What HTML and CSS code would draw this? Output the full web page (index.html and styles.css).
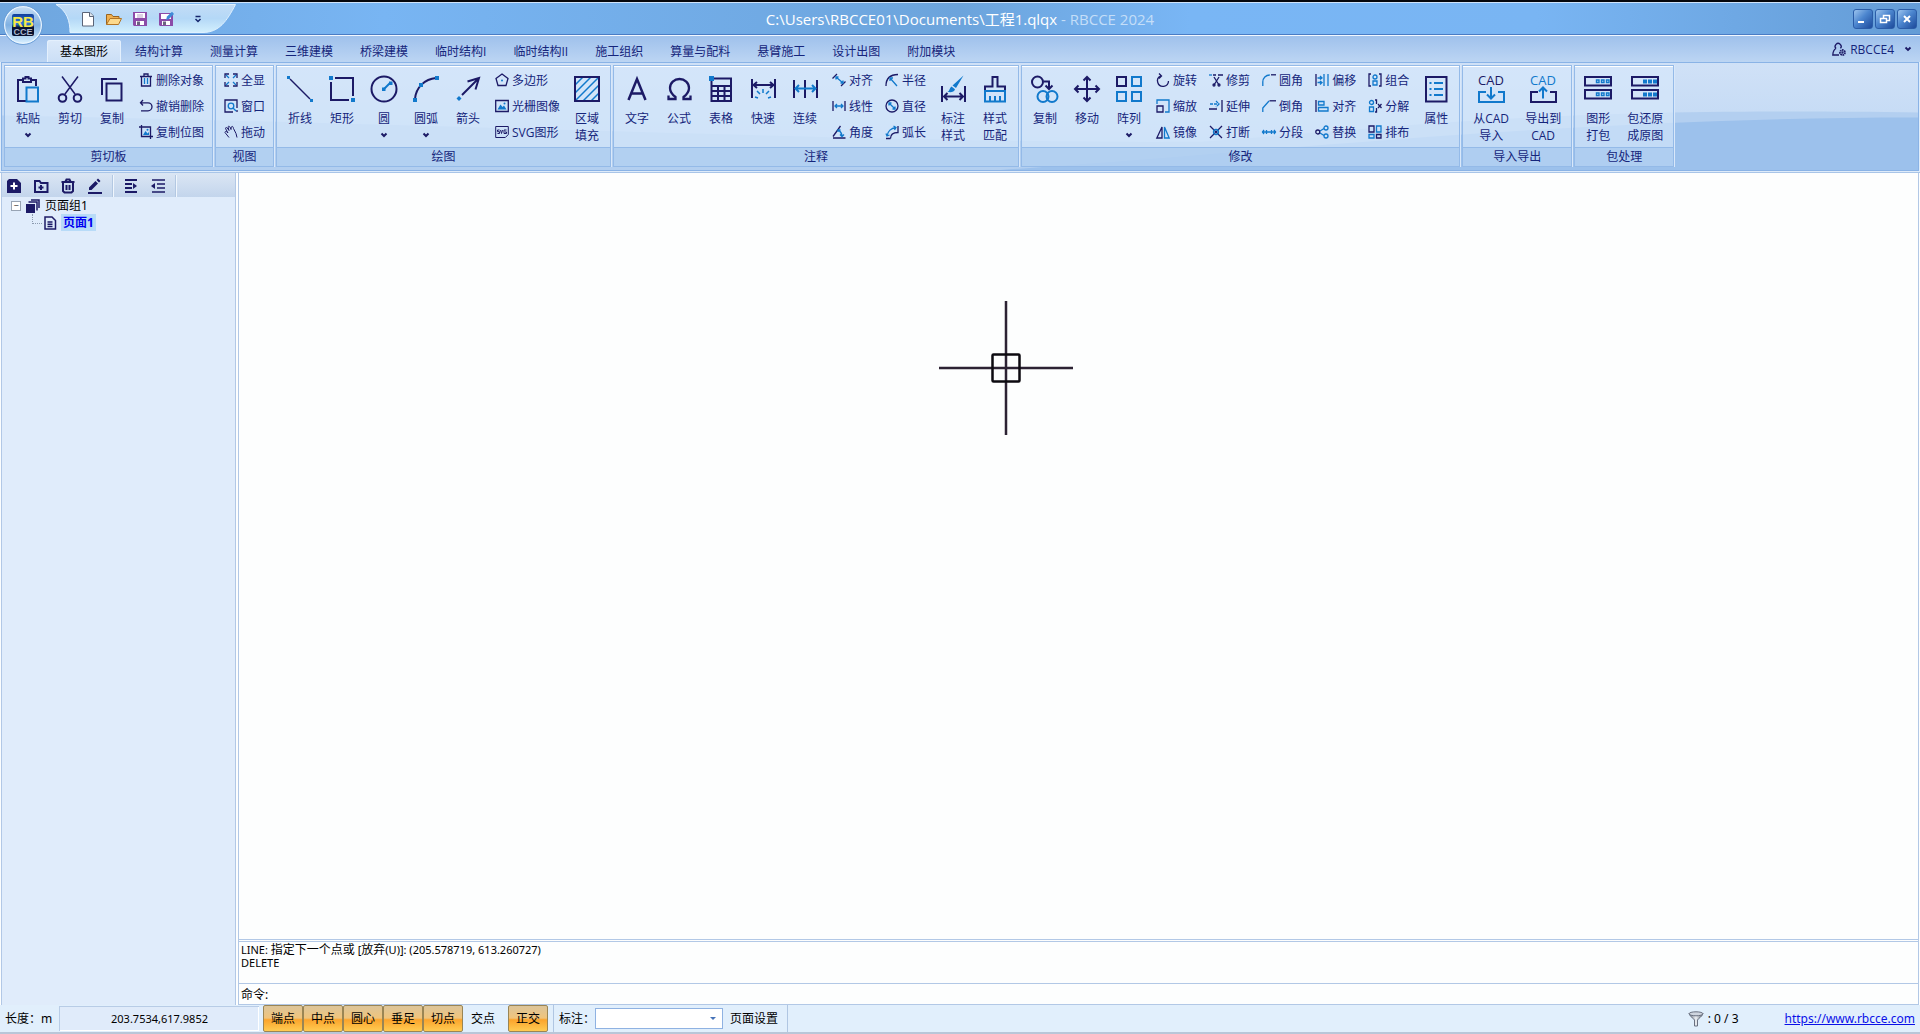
FILE: index.html
```html
<!DOCTYPE html>
<html lang="zh-CN">
<head>
<meta charset="utf-8">
<title>工程1.qlqx - RBCCE 2024</title>
<link rel="stylesheet" href="styles.css">
</head>
<body>
<div class="app">
  <header class="titlebar">
    <svg class="qat-shape" viewBox="0 0 180 30" aria-hidden="true"><defs><linearGradient id="qat" x2="0" y2="1"><stop offset="0" stop-color="#c3dcf6"/><stop offset=".5" stop-color="#b4d8f7"/><stop offset="1" stop-color="#d3f0fd"/></linearGradient></defs><path d="M0 .5H179.500C171 17 163 28.500 147 28.500H14C14 17 11 7 0 .5z" fill="url(#qat)" stroke="#dff0ff"/></svg>
    <nav class="qat" aria-label="快速访问">
      <button aria-label="新建"><svg viewBox="0 0 16 16"><path d="M2.500 1.500h7.500l3.500 3.500v10h-11z" fill="#fff" stroke="#5a6478"/><path d="M9.500 1.500V5.500h4" fill="#dfe6ee" stroke="#5a6478"/></svg></button>
      <button aria-label="打开"><svg viewBox="0 0 16 16"><path d="M.5 13.500V3.500h5l1.500 2h6v3" fill="#f0b050" stroke="#9a6420"/><path d="M.5 13.500L4 7.500h11.500l-3 6z" fill="#fcd98c" stroke="#b27424"/></svg></button>
      <button aria-label="保存"><svg viewBox="0 0 16 16"><path d="M1 1h14v14H2l-1-1z" fill="#8c4ba8"/><path d="M3 2h10v5H3zM4 10h8v4H4z" fill="#fff"/><path d="M5 4h6M5 6h6" stroke="#b9a0c8"/><path d="M5 10.500h3V14H5z" fill="#6c6480"/></svg></button>
      <button aria-label="另存为"><svg viewBox="0 0 16 16"><path d="M1 2h14v13H2l-1-1z" fill="#8c4ba8"/><path d="M3 3h10v5H3zM4 10h8v4H4z" fill="#fff"/><path d="M5 10.500h3V14H5z" fill="#6c6480"/><path d="M8 9l1-3.500L14 .8 16 3l-5 5z" fill="#3f8cd8"/></svg></button>
      <button class="more" aria-label="自定义"><svg viewBox="0 0 16 16"><path d="M5.500 5.500h5M5.500 8l2.500 2.500L10.500 8" fill="none" stroke="#15256b" stroke-width="1.500"/></svg></button>
    </nav>
    <h1 class="title">C:\Users\RBCCE01\Documents\工程1.qlqx<span> - RBCCE 2024</span></h1>
    <div class="winbtns">
      <button aria-label="最小化"><svg viewBox="0 0 18 18"><path d="M4 12h6" stroke="#fff" stroke-width="2"/></svg></button>
      <button aria-label="还原"><svg viewBox="0 0 18 18"><path d="M7.500 8V5.500h6v5H11M4.500 8.500h6v4h-6z" fill="none" stroke="#fff" stroke-width="1.500"/></svg></button>
      <button aria-label="关闭"><svg viewBox="0 0 18 18"><path d="M6 6l6 6M12 6l-6 6" stroke="#fff" stroke-width="2"/></svg></button>
    </div>
  </header>
  <button class="orb" aria-label="RBCCE">
    <svg viewBox="0 0 40 40"><defs><linearGradient id="orb" x2="0" y2="1"><stop offset="0" stop-color="#c8dff5"/><stop offset=".5" stop-color="#7fb0e2"/><stop offset="1" stop-color="#d8efff"/></linearGradient><linearGradient id="logo" x2="0" y2="1"><stop offset="0" stop-color="#123f9c"/><stop offset=".45" stop-color="#2a7bd6"/><stop offset=".62" stop-color="#0a1230"/></linearGradient></defs><circle cx="20" cy="20" r="18.500" fill="url(#orb)" stroke="#e9f5ff" stroke-width="1.500"/><circle cx="20" cy="20" r="19.500" fill="none" stroke="#6b9fd8"/><rect x="9" y="9" width="22" height="22" rx="2" fill="url(#logo)"/><text x="20" y="22" class="logo-rb">RB</text><text x="20" y="30" class="logo-cce">CCE</text></svg>
  </button>

  <div class="tabrow">
    <nav class="tabs" aria-label="功能区">
      <button class="active">基本图形</button><button>结构计算</button><button>测量计算</button><button>三维建模</button><button>桥梁建模</button><button>临时结构I</button><button>临时结构II</button><button>施工组织</button><button>算量与配料</button><button>悬臂施工</button><button>设计出图</button><button>附加模块</button>
    </nav>
    <button class="user"><svg viewBox="0 0 14 14"><path d="M4 6.500a3 3 0 1 1 4.500-.2M4 6.500C2 7.500 1 9.500 .8 13H7"/><circle cx="10.500" cy="10.500" r="2.500" stroke-width="1.800" stroke-dasharray="1.600 .6"/><circle cx="10.500" cy="10.500" r=".5"/></svg>RBCCE4<svg class="chev" viewBox="0 0 6 6"><path d="M.5 1.500L3 4 5.500 1.500"/></svg></button>
  </div>

  <main class="ribbon">
    <svg class="wave" viewBox="0 0 1918 106" preserveAspectRatio="none" aria-hidden="true"><path d="M0 52C500 62 900 80 1200 78C1440 60 1560 44 1918 49V106H0z" fill="#b3cff0"/><path d="M1000 106C1250 90 1560 54 1918 54V106z" fill="#9cc1ec"/></svg>

    <section class="group">
      <div class="body">
        <button class="lg"><svg viewBox="0 0 28 28"><path d="M12 26H4V5h5M17 5h5v6"/><path d="M9 7V3.500h2.500V2h3v1.500H17V7z"/><path class="b" d="M12.500 12.500h11.500v14H12.500z"/></svg><span>粘贴</span><svg class="chev" viewBox="0 0 6 6"><path d="M.5 1.500L3 4 5.500 1.500"/></svg></button>
        <button class="lg"><svg viewBox="0 0 28 28"><path d="M6 1.500L19 19M22 1.500L9 19" stroke-width="1.500"/><circle cx="6.500" cy="23" r="3.800"/><circle cx="21.500" cy="23" r="3.800"/></svg><span>剪切</span></button>
        <button class="lg"><svg viewBox="0 0 28 28"><path d="M4 20V4h15" /><path d="M8.500 8.500h15v17h-15z"/></svg><span>复制</span></button>
        <div class="col">
          <button class="sm"><svg viewBox="0 0 14 14"><path d="M2.500 4v9h9V4M5 3V1h4v2M1 3.500h12"/><path class="b" d="M5.500 5v6M8.500 5v6"/></svg>删除对象</button>
          <button class="sm"><svg viewBox="0 0 14 14"><path d="M4 1L1.500 3.800 4 6.500M1.500 3.800H9a4 4 0 0 1 0 8H2"/></svg>撤销删除</button>
          <button class="sm"><svg viewBox="0 0 14 14"><path d="M0 2h11.500v12M2.500 0v11.500H14"/><path class="bf" d="M4 10l2.500-4 2 2.500L10 7v3z"/><circle class="bf" cx="8.500" cy="4.800" r="1"/></svg>复制位图</button>
        </div>
      </div>
      <h2>剪切板</h2>
    </section>

    <section class="group">
      <div class="body">
        <div class="col">
          <button class="sm"><svg viewBox="0 0 14 14"><path d="M1 5V1h4M9 1h4v4M13 9v4H9M5 13H1V9"/><path class="b" d="M2 2l3 3M12 2L9 5M12 12L9 9M2 12l3-3"/></svg>全显</button>
          <button class="sm"><svg viewBox="0 0 14 14"><path d="M9 13H1V1h12v8M13 11v2"/><circle class="b" cx="7" cy="7" r="2.800"/><path class="b" d="M9 9l3 3"/></svg>窗口</button>
          <button class="sm"><svg viewBox="0 0 14 14"><path d="M5 12.500L1 7.500C1 6 2.500 6 4 8L1.500 3.500C1.500 2 3 2 5 5.500L4 2C4.500 .5 6 1 7 4.500C7 .5 9 .5 9.500 3.500L12 8.500 13 12.500" stroke-width="1"/></svg>拖动</button>
        </div>
      </div>
      <h2>视图</h2>
    </section>

    <section class="group">
      <div class="body">
        <button class="lg"><svg viewBox="0 0 28 28"><path d="M4 4l20 20" stroke-width="1.500"/><path class="bf" d="M1 1h3v3H1zM24 24h3v3h-3z"/></svg><span>折线</span></button>
        <button class="lg"><svg viewBox="0 0 28 28"><path d="M7 3h18v18M21 25H3V7"/><path class="bf" d="M1 1h4v4H1zM23 23h4v4h-4z"/></svg><span>矩形</span></button>
        <button class="lg"><svg viewBox="0 0 28 28"><circle cx="14" cy="14" r="12.500"/><path class="b" d="M14 14l6-6"/><path class="bf" d="M12 12.500h3.500V16H12zM19 6.500h3.500V10H19z"/></svg><span>圆</span><svg class="chev" viewBox="0 0 6 6"><path d="M.5 1.500L3 4 5.500 1.500"/></svg></button>
        <button class="lg"><svg viewBox="0 0 28 28"><path d="M3 24C4 12 13 4 24 3"/><path class="bf" d="M1 23h4v4H1zM23 1h4v4h-4zM7 8h4v4H7z"/></svg><span>圆弧</span><svg class="chev" viewBox="0 0 6 6"><path d="M.5 1.500L3 4 5.500 1.500"/></svg></button>
        <button class="lg"><svg viewBox="0 0 28 28"><path d="M8 20L25 3M13.500 6.500L25 3l-3.500 11.500"/><path class="bf" d="M5 21l2.500 2.500L5 26l-2.500-2.500z"/></svg><span>箭头</span></button>
        <div class="col">
          <button class="sm"><svg viewBox="0 0 14 14"><path d="M7 1l6 4.500L11 12.500H3L1 5.500z"/><circle class="bf" cx="7" cy="7.500" r="1"/></svg>多边形</button>
          <button class="sm"><svg viewBox="0 0 14 14"><path d="M.7 1.500h12.600v11H.7z"/><path class="bf" d="M2.500 10.500l3-5 2 2.500L9 6.500l2.500 4z"/><circle class="bf" cx="9.500" cy="4.500" r="1"/></svg>光栅图像</button>
          <button class="sm"><svg viewBox="0 0 14 14"><path d="M.7 1.500h12.600v8l-3 3H.7z" stroke-width="1"/><path d="M4.500 5H2.500v1.700h2v1.800H2.500M5.500 5l1 3.500L7.500 5M11.500 5H9v3.500h2.500V7H10" stroke-width="1"/></svg>SVG图形</button>
        </div>
        <button class="lg"><svg viewBox="0 0 28 28"><path class="b" d="M2 10l8-8M2 18L18 2M2 26L26 2M10 26l16-16M18 26l8-8" stroke-width="1.500"/><path d="M2 2h24v24H2z"/></svg><span>区域<br>填充</span></button>
      </div>
      <h2>绘图</h2>
    </section>

    <section class="group">
      <div class="body">
        <button class="lg"><svg viewBox="0 0 28 28"><path d="M5.500 25L14 4l8.500 21M8.500 18.500h11" stroke-width="2.500"/></svg><span>文字</span></button>
        <button class="lg"><svg viewBox="0 0 28 28"><path d="M3.500 20.500V24h7v-2C6.500 19 5 16 5 13a9.500 9 0 0 1 19 0c0 3-1.500 6-5.500 9v2h7v-3.500" stroke-width="2.300"/></svg><span>公式</span></button>
        <button class="lg"><svg viewBox="0 0 28 28"><path d="M4.500 3.500H24V26H4.500zM4.500 11H24M4.500 16H24M4.500 21H24M11 11v15M17.500 11v15"/><path class="bf" d="M2 1h5v5H2z"/></svg><span>表格</span></button>
        <button class="lg"><svg viewBox="0 0 28 28"><path d="M3 4v19M26 4v19M5 10h18M8 7l-3.500 3L8 13M21 7l3.500 3-3.500 3"/><path class="b" d="M6 22l3 1M8 16l3 3M14 14v4M20 16l-3 3M22 22l-3 1" stroke-width="1.500"/></svg><span>快速</span></button>
        <button class="lg"><svg viewBox="0 0 28 28"><path d="M3 5v18M14 5v18M26 5v18"/><path class="b" d="M4 13.500h20M8 10l-3.500 3.500L8 17M21 10l3.500 3.500L21 17"/></svg><span>连续</span></button>
        <div class="col">
          <button class="sm"><svg viewBox="0 0 14 14"><path d="M.5 5.500L5 1M9 13l4.500-4.500"/><path class="b" d="M4 4l7 6M4 6.500V4h2.500M8.500 10H11V7.500"/></svg>对齐</button>
          <button class="sm"><svg viewBox="0 0 14 14"><path d="M1 2v10M13 2v10"/><path class="b" d="M3 7h8M5 5L3 7l2 2M9 5l2 2-2 2"/></svg>线性</button>
          <button class="sm"><svg viewBox="0 0 14 14"><path d="M8.500 1L1 11.500M1 13h12.500"/><path class="b" d="M7 5.500c2 1.500 3 3.500 3 6M8 9.500l2 2 2-2M6 7V5h2.500"/></svg>角度</button>
        </div>
        <div class="col">
          <button class="sm"><svg viewBox="0 0 14 14"><path d="M1 13C1 6 5 1.500 13 1.500"/><path class="b" d="M5 5l7 8M5 8V5h3"/></svg>半径</button>
          <button class="sm"><svg viewBox="0 0 14 14"><circle cx="7" cy="7" r="6"/><path class="b" d="M4 4l6 6M4 6.500V4h2.500M7.500 10H10V7.500"/></svg>直径</button>
          <button class="sm"><svg viewBox="0 0 14 14"><path d="M5.500 13.500c0-3.500 2-6 7.500-6V1M1 13.500h4.500"/><path class="b" d="M2 11C3 6 5 3.500 11 2.500M8.500 1L11 2.500 9.500 5M1 8.500L2 11l2.500-1"/></svg>弧长</button>
        </div>
        <button class="lg"><svg viewBox="0 0 28 28"><path d="M3 11v16M26 11v16M5 21.500h19M8.500 18L5 21.500 8.500 25M20.500 18l3.500 3.500-3.500 3.500"/><path class="bf" d="M24.500 .5L17 13l-3.500-2.500zM12.500 11.500l3.500 2.800c-1 3-3.500 3-7.500 2.700 2-1 2-4 4-5.500z"/></svg><span>标注<br>样式</span></button>
        <button class="lg"><svg viewBox="0 0 28 28"><path d="M4 16v-4.500h7.500V2h5v9.500H24V16"/><path class="b" d="M4 16h20v10.500H4zM9 26v-5M14 26v-5M19 26v-5"/></svg><span>样式<br>匹配</span></button>
      </div>
      <h2>注释</h2>
    </section>

    <section class="group">
      <div class="body">
        <button class="lg"><svg viewBox="0 0 28 28"><circle cx="6.500" cy="7" r="5.500"/><path d="M13 6.500h5v7M14.500 10.500l3.500 3.500 3.500-3.500"/><circle class="b" cx="12" cy="21.500" r="5.500"/><circle class="b" cx="21" cy="21.500" r="5.500"/></svg><span>复制</span></button>
        <button class="lg"><svg viewBox="0 0 28 28"><path d="M14 2v24M2 14h24M10.500 5.500L14 2l3.500 3.500M10.500 22.500L14 26l3.500-3.500M5.500 10.500L2 14l3.500 3.500M22.500 10.500L26 14l-3.500 3.500"/></svg><span>移动</span></button>
        <button class="lg"><svg viewBox="0 0 28 28"><path d="M2 2h9v9H2z"/><path class="b" d="M17 2h9v9h-9zM2 17h9v9H2zM17 17h9v9h-9z"/></svg><span>阵列</span><svg class="chev" viewBox="0 0 6 6"><path d="M.5 1.500L3 4 5.500 1.500"/></svg></button>
        <div class="col">
          <button class="sm"><svg viewBox="0 0 14 14"><path d="M4.500 3A5.500 5.500 0 1 0 12.500 8M3 .5L5.500 3 3 5.500"/></svg>旋转</button>
          <button class="sm"><svg viewBox="0 0 14 14"><path d="M1 7h6v6H1z"/><path class="b" d="M1 5V1h12v12H9"/></svg>缩放</button>
          <button class="sm"><svg viewBox="0 0 14 14"><path d="M6 2v11H.8z"/><path class="b" d="M8.500 2v11h4.700z"/></svg>镜像</button>
        </div>
        <div class="col">
          <button class="sm"><svg viewBox="0 0 14 14"><path class="b" d="M0 2h3"/><path d="M4 2h3M9 2h5M5 4l5 8M10 4l-5 8"/><circle cx="5" cy="12" r="1"/><circle cx="10" cy="12" r="1"/></svg>修剪</button>
          <button class="sm"><svg viewBox="0 0 14 14"><path d="M13 1v12M0 10h8"/><path class="b" d="M1 5h9M7 2l3 3-3 3" stroke-dasharray="3 1"/></svg>延伸</button>
          <button class="sm"><svg viewBox="0 0 14 14"><path d="M1 1l12 12M13 1L1 13"/><circle class="b" cx="7" cy="7" r="2.500"/></svg>打断</button>
        </div>
        <div class="col">
          <button class="sm"><svg viewBox="0 0 14 14"><path class="b" d="M.8 13V9c0-4 3-7 7-7"/><path d="M9 1.800h5"/></svg>圆角</button>
          <button class="sm"><svg viewBox="0 0 14 14"><path class="b" d="M.8 13V9L7 2"/><path d="M7.500 1.800H14"/></svg>倒角</button>
          <button class="sm"><svg viewBox="0 0 14 14"><path class="b" d="M0 7h14M4.500 5v4M9.500 5v4M2 5L.5 7 2 9M12 5l1.500 2L12 9"/></svg>分段</button>
        </div>
        <div class="col">
          <button class="sm"><svg viewBox="0 0 14 14"><path d="M1 1v12"/><path class="b" d="M9 1v12M13 1v12M2.500 5h4M5 3l2 2-2 1.500M2.500 9.500h4M5 8l2 1.500L5 11.500"/></svg>偏移</button>
          <button class="sm"><svg viewBox="0 0 14 14"><path d="M1 1v12"/><path class="b" d="M3.500 2.500H9v3.500H3.500zM3.500 8.500H13V12H3.500z"/></svg>对齐</button>
          <button class="sm"><svg viewBox="0 0 14 14"><circle cx="2.800" cy="7" r="2"/><path class="b" d="M5 6l4-2.500M5 8l4 2.500"/><circle class="b" cx="11" cy="3" r="2"/><circle class="b" cx="11" cy="11" r="2"/></svg>替换</button>
        </div>
        <div class="col">
          <button class="sm"><svg viewBox="0 0 14 14"><path d="M3 1H1v12h2M11 1h2v12h-2"/><circle class="b" cx="7" cy="4" r="2"/><path class="b" d="M5 8h4v4H5z"/></svg>组合</button>
          <button class="sm"><svg viewBox="0 0 14 14"><circle class="b" cx="3.500" cy="3.500" r="2"/><path class="b" d="M1.500 8h4v4.500h-4z"/><path d="M7 1h1.500v4M7 13h1.500V9M10 5l3.500 4M13.500 5L10 9"/></svg>分解</button>
          <button class="sm"><svg viewBox="0 0 14 14"><path d="M1 1h5v6H1z"/><path class="b" d="M8.500 1h4.500v6H8.500zM1 9.500h5V13H1z"/><path d="M8.500 9.500h4.500V13H8.500z"/></svg>排布</button>
        </div>
        <button class="lg"><svg viewBox="0 0 28 28"><path d="M4 2h20.500v24.500H4z"/><path class="b" d="M12 8h9M12 14h9M12 20h9"/><path class="bf" d="M7.500 7h2v2h-2zM7.500 13h2v2h-2zM7.500 19h2v2h-2z"/></svg><span>属性</span></button>
      </div>
      <h2>修改</h2>
    </section>

    <section class="group">
      <div class="body">
        <button class="lg wide"><svg viewBox="0 0 28 28"><text x="14" y="10">CAD</text><path class="b" d="M9 17H2v10h25V17h-6M14 12v11M10 19.500l4 4 4-4"/></svg><span>从CAD<br>导入</span></button>
        <button class="lg wide"><svg viewBox="0 0 28 28"><text class="tb" x="14" y="10">CAD</text><path d="M9 17H2v10h25V17h-6"/><path class="b" d="M14 23.500v-11M10 16.500l4-4 4 4"/></svg><span>导出到<br>CAD</span></button>
      </div>
      <h2>导入导出</h2>
    </section>

    <section class="group">
      <div class="body">
        <button class="lg"><svg viewBox="0 0 28 28"><path d="M1 2h26v8.500H1zM1 15h26v8.500H1z"/><path class="b thin" d="M12.500 5h2.500v2.500h-2.500zM17.500 5h2.500v2.500h-2.500zM22.500 5h2.500v2.500h-2.500zM12.500 18h2.500v2.500h-2.500zM17.500 18h2.500v2.500h-2.500zM22.500 18h2.500v2.500h-2.500z"/></svg><span>图形<br>打包</span></button>
        <button class="lg wide"><svg viewBox="0 0 28 28"><path d="M1 2h26v8.500H1zM1 15h26v8.500H1z"/><path class="bf" d="M12 4.500h4v4h-4zM17 4.500h4v4h-4zM22 4.500h4v4h-4zM12 17.500h4v4h-4zM17 17.500h4v4h-4zM22 17.500h4v4h-4z"/></svg><span>包还原<br>成原图</span></button>
      </div>
      <h2>包处理</h2>
    </section>
  </main>

  <div class="workspace">
    <aside class="side">
      <div class="sidebar-tools">
        <div class="tools">
          <button aria-label="新建页面"><svg viewBox="0 0 16 16"><path class="kf" d="M1 3l2-2h8l4 4v10H1z"/><path d="M8 4.500v7M4.500 8h7" stroke="#fff"/></svg></button>
          <button aria-label="新建页面组"><svg viewBox="0 0 16 16"><path d="M2 3h4.500l1.500 2h6.500v9H2zM8 7v5M5.500 9.500h5"/></svg></button>
          <button aria-label="删除"><svg viewBox="0 0 16 16"><path d="M3 4v9l1.500 1.500h7L13 13V4M1.500 4h13M5.500 3.500l1-2h3l1 2M6.500 7v5M9.500 7v5"/></svg></button>
          <button aria-label="重命名"><svg viewBox="0 0 16 16"><path d="M1 15h14"/><path class="kf" d="M2 12V9.500l6.500-6.500 2.500 2.500L4.500 12zM9.500 2l1.500-1.500 2.500 2.500L12 4.500z"/></svg></button>
        </div>
        <div class="tools">
          <button aria-label="展开"><svg viewBox="0 0 16 16"><path d="M2 2h12M2 6h7M2 10h7M2 14h12"/><path class="kf" d="M10 5l4 3-4 3z"/></svg></button>
          <button aria-label="折叠"><svg viewBox="0 0 16 16"><path d="M2 2h13M7 6h8M7 10h8M2 14h13" stroke-width="1.500"/><path class="kf" d="M5 5L1 8l4 3z"/></svg></button>
        </div>
      </div>
      <ul class="tree">
        <li class="row"><button class="exp" aria-label="折叠">−</button><svg viewBox="0 0 14 14"><path class="kf" d="M0 5h9v9H0z"/><path d="M2.500 3h8.500v8.500M5 1h8v8" stroke-width="1.500"/></svg><span>页面组1</span></li>
        <li class="row child"><svg viewBox="0 0 14 14"><path d="M2 1h7l3.500 3.500V13H2zM4.500 6h5M4.500 8.200h5M4.500 10.500h5" stroke-width="1.500"/></svg><span class="sel">页面1</span></li>
      </ul>
    </aside>
    <div class="doc">
      <div class="canvas">
        <svg class="cross" viewBox="0 0 136 136"><path d="M1 68h134M68 1v134" stroke="#2c2233" stroke-width="2.500"/><rect x="54.500" y="54.500" width="27" height="27" rx="1" fill="none" stroke="#0c0a10" stroke-width="2.500"/></svg>
      </div>
      <div class="log">LINE: <span>指定下一个点或</span> [<span>放弃</span>(U)]: (205.578719, 613.260727)<br>DELETE</div>
      <label class="cmd">命令:<input type="text"></label>
    </div>
  </div>

  <footer class="status">
    <span class="unit">长度：m</span>
    <output class="coords">203.7534,617.9852</output>
    <div class="snaps"><button class="on">端点</button><button class="on">中点</button><button class="on">圆心</button><button class="on">垂足</button><button class="on">切点</button><button>交点</button></div>
    <button class="on ortho">正交</button>
    <label class="dim">标注：<select><option></option></select></label>
    <button class="page">页面设置</button>
    <span class="filter"><svg viewBox="0 0 16 16"><defs><linearGradient id="fn"><stop offset="0" stop-color="#6d7480"/><stop offset=".5" stop-color="#eef1f5"/><stop offset="1" stop-color="#5c6370"/></linearGradient></defs><path d="M1 2.500C2 6 6 7.500 6.500 9v6h3V9C10 7.500 14 6 15 2.500z" fill="url(#fn)" stroke="#697080"/><ellipse cx="8" cy="2.800" rx="7" ry="2" fill="#cfd5df" stroke="#697080"/></svg>: 0 / 3</span>
    <a href="https://www.rbcce.com">https://www.rbcce.com</a>
  </footer>
</div>
</body>
</html>
```
FILE: styles.css
```css
* { box-sizing: border-box; }
body {
  margin: 0;
  font: 12px/17px "Open Sans", "Noto Sans CJK SC", sans-serif;
  color: #15257b;
}
button {
  border: 0;
  padding: 0;
  background: none;
  font: inherit;
  color: inherit;
  white-space: nowrap;
}
svg { display: block; flex: none; overflow: visible; }
h1, h2, ul { margin: 0; padding: 0; font: inherit; list-style: none; }

.app { display: flex; flex-direction: column; min-height: 100vh; position: relative; background: #dfecfa; }

/* title bar */
.titlebar {
  position: relative;
  display: grid;
  grid-template-columns: 1fr auto 1fr;
  align-items: center;
  height: 36px;
  border-top: 2px solid #05070d;
  border-bottom: 1px solid #f2f8ff;
  box-shadow: inset 0 1px #cfe3fa, inset 0 -1px #4a7cc4;
  background: linear-gradient(90deg, #6fa6de, #78b5f3 20%, #6ca4dc 50%, #79b6f5 62%, #79b5f3 80%, #649cd6);
}
.qat-shape { position: absolute; left: 56px; top: 2px; width: 180px; height: 30px; }
.qat { position: relative; display: flex; gap: 10px; margin-left: 80px; }
.qat svg { width: 16px; height: 16px; }
.qat .more { margin-left: 6px; }
.title { font-size: 15px; line-height: 20px; color: #fff; }
.title span { color: #c4def8; }
.winbtns { display: flex; justify-content: flex-end; gap: 2px; margin-right: 3px; }
.winbtns button {
  width: 20px; height: 20px;
  border: 1px solid #2b5da8;
  border-radius: 3px;
  background: linear-gradient(135deg, #9cc4ee, #4c86cf 45%, #1d4a9b);
}
.winbtns svg { width: 18px; height: 18px; }
.orb { position: absolute; left: 3px; top: 5px; z-index: 2; }
.orb svg { width: 40px; height: 40px; }
.logo-rb { font: bold 15px "Liberation Sans", sans-serif; fill: #f7e948; text-anchor: middle; }
.logo-cce { font: bold 9px "Liberation Sans", sans-serif; fill: #aab6cc; text-anchor: middle; }

/* tab row */
.tabrow {
  display: flex;
  justify-content: space-between;
  align-items: flex-end;
  height: 26px;
  background: linear-gradient(#9fc1ec, #bcd5f3);
}
.tabs { display: flex; gap: 1px; margin-left: 47px; }
.tabs button { height: 22px; padding: 1px 13px 0; }
.tabs .active {
  color: #000;
  border-radius: 3px 3px 0 0;
  box-shadow: inset 1px 1px #e4f0fd, inset -1px 0 #e4f0fd;
  background: linear-gradient(#dceafa, #cbdff6);
}
.user { display: flex; align-items: center; gap: 4px; height: 26px; margin-right: 9px; }
.user svg, .ribbon svg, .side svg { fill: none; stroke: #1c1a66; stroke-width: 1.3; }
.user svg { width: 14px; height: 14px; }
.user .chev, .ribbon .chev { width: 6px; height: 6px; stroke-width: 1.8; }
.user .chev { margin-left: 7px; }

/* ribbon */
.ribbon {
  position: relative;
  display: flex;
  gap: 2px;
  padding: 2px 2px 3px;
  margin: 0 1px;
  border: 1px solid #8ab3e6;
  background: linear-gradient(#d0e1f7, #bcd6f3);
}
.ribbon .wave { position: absolute; inset: 0; width: 100%; height: 100%; stroke: none; overflow: hidden; }
.group {
  position: relative;
  border: 1px solid #94bae8;
  box-shadow: inset 0 1px #fff, 1px 0 #d9e8fa;
  background: rgba(213, 231, 250, .68);
}
.body { display: flex; padding: 1px 2px 0; height: 81px; }
.group h2 {
  height: 19px;
  line-height: 17px;
  text-align: center;
  border-top: 1px solid #94bae8;
  background: rgba(158, 195, 236, .55);
}
.lg {
  display: flex;
  flex-direction: column;
  justify-content: flex-start;
  align-items: center;
  width: 42px;
  padding-top: 8px;
}
.lg.wide { width: 52px; }
.ribbon .lg svg { width: 28px; height: 28px; margin-bottom: 7px; stroke-width: 2; }
.ribbon .lg .thin { stroke-width: 1.4; }
.ribbon .lg .chev { width: 6px; height: 6px; margin: 5px 0 0; }
.sm { display: flex; align-items: center; gap: 3px; height: 26px; padding: 0 6px; }
.sm svg { width: 14px; height: 14px; }
.ribbon .b { stroke: #1179cc; }
.ribbon .bf { fill: #1179cc; stroke: none; }
.lg text { font-size: 13px; text-anchor: middle; stroke: none; fill: #1c1a66; }
.lg .tb { fill: #1179cc; }

/* workspace */
.workspace { flex: 1; display: flex; margin-top: 1px; border-top: 1px solid #a9c5e8; padding: 0 1px; background: #fdfefe; }
.side { width: 235px; border: 1px solid #b2c8e6; border-width: 0 1px; background: #e0ecfb; margin-right: 2px; }
.sidebar-tools { display: flex; height: 24px; padding-top: 2px; background: linear-gradient(#dbe6f4, #c3d5ec); }
.tools { display: flex; align-items: center; gap: 11px; padding: 0 9px 0 4px; box-shadow: 1px 0 #b3c8e2, 2px 0 #f0f6fd; }
.tools + .tools { padding-left: 11px; }
.side svg { width: 16px; height: 16px; stroke-width: 2; }
.side .kf { fill: #1c1a66; stroke: none; }
.tree { padding-left: 9px; }
.row { display: flex; align-items: center; height: 17px; color: #000; }
.side .row svg { width: 14px; height: 14px; margin: 0 5px; }
.exp { width: 10px; height: 10px; border: 1px solid #98a4b4; background: #fff; line-height: 8px; font-size: 9px; color: #333; }
.child { margin-left: 21px; }
.child::before { content: ""; width: 9px; height: 9px; margin: -8px -4px 0 0; border: dotted #8d9bb0; border-width: 0 0 1px 1px; }
.side .child svg { margin-right: 4px; }
.sel { padding: 0 2px; background: #b8dbf8; color: #0000f0; font-weight: bold; }
.doc { flex: 1; display: flex; flex-direction: column; border: 1px solid #b2c8e6; border-top: 0; color: #000; background: #fdfefe; }
.canvas { flex: 1; position: relative; }
.cross { position: absolute; left: 699px; top: 127px; width: 136px; height: 136px; }
.log, .cmd, .status, .tree { font-family: "Noto Sans", "Noto Sans CJK SC", sans-serif; }
.log {
  height: 45px;
  padding: 1px 2px 0;
  line-height: 13px;
  font-size: 11px;
  border-top: 3px double #b2c8e6;
  border-bottom: 1px solid #b2c8e6;
}
.log span { font-size: 12px; }
.cmd { display: flex; align-items: center; height: 20px; padding-left: 2px; }
.cmd input { flex: 1; border: 0; padding: 0 2px; background: none; font: inherit; outline: 0; }

/* status bar */
.status {
  display: flex;
  align-items: center;
  height: 29px;
  padding: 0 5px;
  color: #000;
  border-bottom: 2px solid #b9c6d8;
  background: #e1effc;
}
.unit { width: 54px; white-space: nowrap; }
.coords { width: 200px; height: 25px; line-height: 23px; text-align: center; font-size: 11px; border: 1px solid #b8cce6; border-width: 1px 0 0 1px; box-shadow: inset -1px -1px #fff; background: #e0ebfa; }
.snaps { display: flex; margin-left: 4px; }
.snaps button, .ortho { width: 40px; height: 27px; }
.status .on {
  border: 1px solid #9a8554;
  border-radius: 2px;
  background: linear-gradient(#dcc59a, #f0c47c 48%, #fba42c 55%, #ffcb52);
}
.ortho { margin-left: 5px; }
.dim { display: flex; align-items: center; height: 27px; margin-left: 5px; padding-left: 5px; border-left: 1px solid #b0c6e2; }
.dim select {
  width: 128px; height: 21px;
  appearance: none;
  border: 1px solid #8fb2e2;
  background: #fff;
}
.dim::after { content: ""; margin-left: -13px; margin-right: 7px; border: 3px solid transparent; border-top-color: #4673b8; border-bottom: 0; }
.page { height: 27px; padding: 0 9px 0 7px; border-right: 1px solid #b0c6e2; }
.filter { display: flex; align-items: center; gap: 4px; margin-left: auto; margin-right: 46px; }
.filter svg { width: 16px; height: 16px; }
.status a { color: #0a10e8; }
```
